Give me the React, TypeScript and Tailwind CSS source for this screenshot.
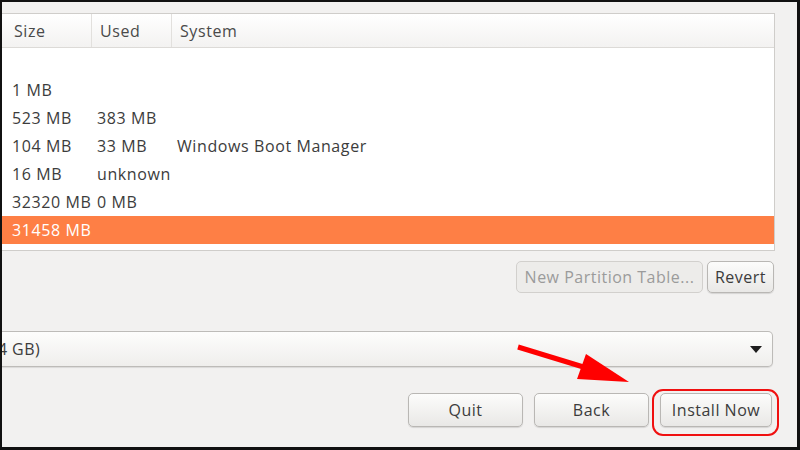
import React from 'react';

const rows = [
  { size: '', used: '', system: '' },
  { size: '1 MB', used: '', system: '' },
  { size: '523 MB', used: '383 MB', system: '' },
  { size: '104 MB', used: '33 MB', system: 'Windows Boot Manager' },
  { size: '16 MB', used: 'unknown', system: '' },
  { size: '32320 MB', used: '0 MB', system: '' },
  { size: '31458 MB', used: '', system: '', selected: true },
];

const btn =
  'rounded-[5px] border border-[#b9b7b4] bg-gradient-to-b from-[#fcfcfb] to-[#e9e8e6] shadow-[0_1px_1px_rgba(0,0,0,0.12)] text-[16px] tracking-[0.5px] text-[#3c3c3c]';

export default function App() {
  return (
    <div
      className="relative w-[800px] h-[450px] bg-[#111] pt-[2px] pl-[2px] pr-[3px] pb-[3px] overflow-hidden"
      style={{ fontFamily: '"Open Sans", "Noto Sans", sans-serif' }}
    >
      <div className="h-full bg-[#f2f1f0] flex flex-col overflow-hidden">
        {/* cut-off labels of the row above */}
        <div className="h-[11px] overflow-hidden relative">
          <div className="flex text-[15px] text-[#a5a5a5] -mt-[17px] leading-[20px] whitespace-nowrap">
            <span className="ml-[78px]">ntfs 4</span>
            <span className="ml-[128px]">-- -- --</span>
            <span className="ml-[80px]">-- -- --</span>
          </div>
        </div>

        {/* partition table */}
        <div className="mr-[22px] h-[238px] bg-white border border-l-0 border-[#cfcdca] flex flex-col tracking-[0.6px]">
          <div className="h-[34px] flex border-b border-[#dcdad7] bg-gradient-to-b from-white to-[#f3f2f1] text-[16px] text-[#4a4a4a]">
            <div className="w-[90px] pl-[12px] flex items-center border-r border-[#e2e0dd]">Size</div>
            <div className="w-[80px] pl-[8px] flex items-center border-r border-[#e2e0dd]">Used</div>
            <div className="flex-1 pl-[8px] flex items-center">System</div>
          </div>
          {rows.map((r, i) => (
            <div
              key={i}
              className={
                'h-[28px] flex items-center text-[16px] ' +
                (r.selected ? 'bg-[#fe7f45] text-white' : 'text-[#3c3c3c]')
              }
            >
              <div className="w-[90px] pl-[10px] whitespace-nowrap">{r.size}</div>
              <div className="w-[80px] pl-[5px] whitespace-nowrap">{r.used}</div>
              <div className="flex-1 pl-[5px] whitespace-nowrap">{r.system}</div>
            </div>
          ))}
        </div>

        <div className="mr-[23px] mt-[10px] flex justify-end gap-[4px]">
          <button className="h-[32px] w-[187px] rounded-[5px] border border-[#d2d0cd] bg-[#edecea] text-[16px] tracking-[0.5px] text-[#9b9b9b] whitespace-nowrap">
            New Partition Table...
          </button>
          <button className={btn + ' h-[32px] w-[67px]'}>Revert</button>
        </div>

        {/* device selector */}
        <div className="mr-[24px] mt-[38px] h-[36px] rounded-r-[5px] border border-l-0 border-[#bdbbb8] bg-gradient-to-b from-[#fdfdfc] to-[#efeeec] shadow-[0_1px_1px_rgba(0,0,0,0.1)] flex items-center justify-between">
          <div className="w-[38px] overflow-hidden flex justify-end whitespace-nowrap text-[16px] tracking-[0.4px] text-[#3c3c3c]">
            <span className="shrink-0">(34.4 GB)</span>
          </div>
          <svg width="12" height="7" viewBox="0 0 12 7" className="mr-[10px]">
            <path d="M0 0 L12 0 L6 7 Z" fill="#1e1e1e" />
          </svg>
        </div>

        <div className="mr-[25px] mt-[26px] flex justify-end gap-[11px]">
          <button className={btn + ' h-[34px] w-[115px]'}>Quit</button>
          <button className={btn + ' h-[34px] w-[115px]'}>Back</button>
          <button className={btn + ' h-[34px] w-[112px] whitespace-nowrap'}>Install Now</button>
        </div>
      </div>

      {/* annotation */}
      <div className="absolute left-[652px] top-[389px] w-[127px] h-[47px] rounded-[11px] border-2 border-[#f01010] pointer-events-none" />
      <svg className="absolute left-0 top-0 pointer-events-none" width="800" height="450">
        <line x1="518" y1="347" x2="590" y2="369" stroke="#ff0000" strokeWidth="5" />
        <path d="M586 354 L577 379 L629 382 Z" fill="#ff0000" />
      </svg>
    </div>
  );
}
